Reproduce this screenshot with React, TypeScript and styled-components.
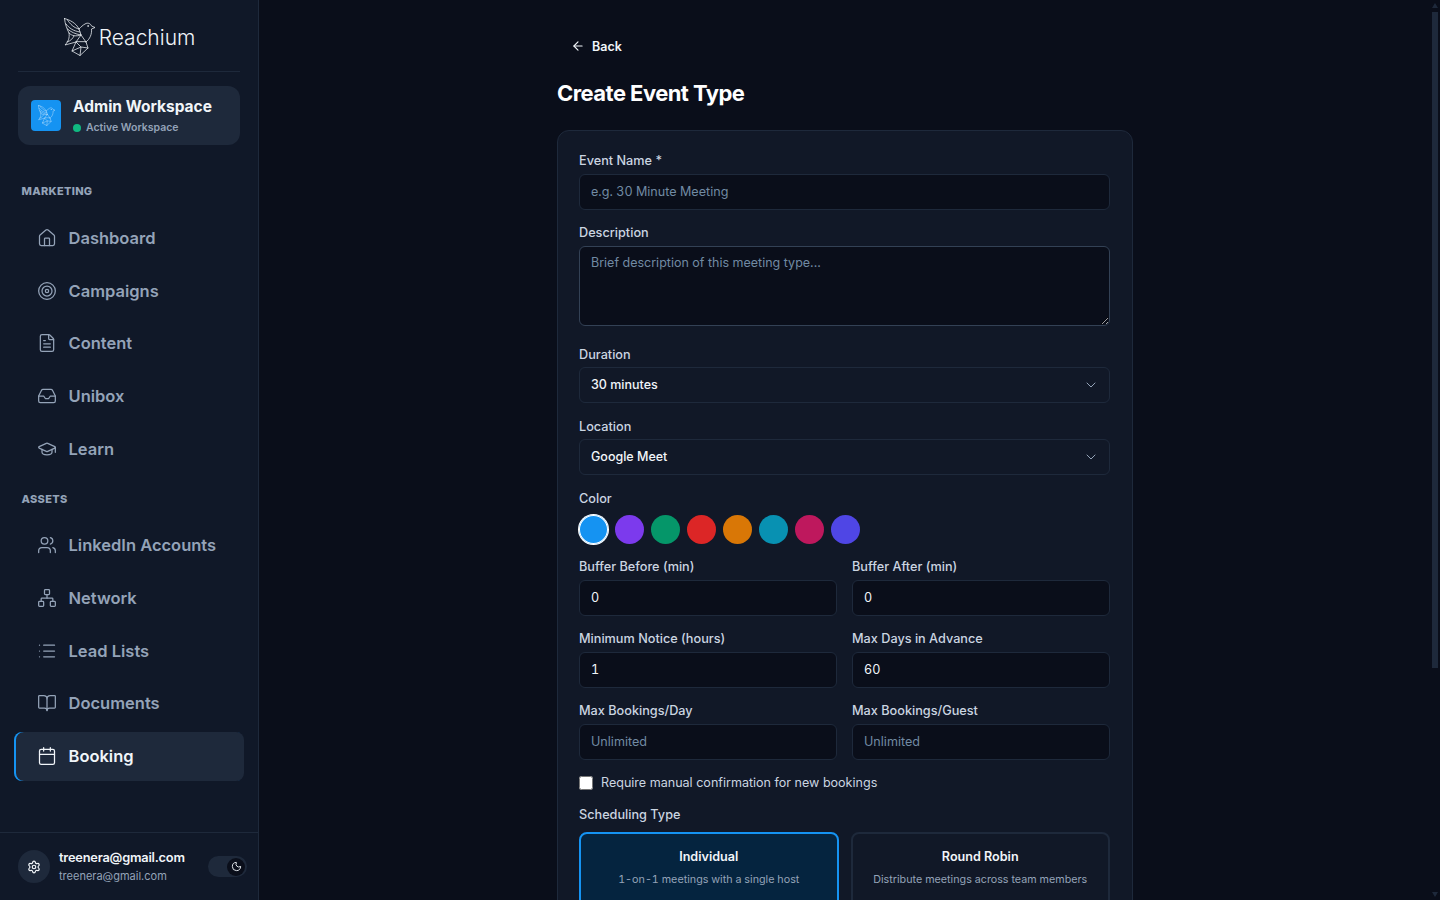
import React from 'react';
import styled, { createGlobalStyle } from 'styled-components';
import { ArrowLeft, BookOpen, Calendar, ChevronDown, FileText, GraduationCap, House, Inbox, List, Moon, Network, Settings, Target, Users } from 'lucide-react';

const Global = createGlobalStyle`
  * { box-sizing: border-box; }
  html, body { margin: 0; height: 100%; overflow: hidden; background: #0a0e1a; }
  body { font-family: Inter, "Noto Sans", sans-serif; color: #e2e8f0; }
  #root { height: 100%; }
`;

const Shell = styled.div`display: flex; height: 100vh;`;
const Sidebar = styled.aside`
  width: 259px; flex: none; height: 100%; background: #101828; border-right: 1px solid #1e293b;
  display: flex; flex-direction: column;
`;
const LogoRow = styled.div`
  height: 72px; margin: 0 18px; border-bottom: 1px solid #1e293b;
  display: flex; align-items: center; justify-content: center; gap: 4px; padding: 3px 0 0 1px;
`;
const LogoText = styled.span`font-size: 21px; font-weight: 300; color: #f1f5f9;`;
const WorkspaceCard = styled.div`
  margin: 14px 18px 0; height: 59px; background: #1e293b; border-radius: 12px; display: flex; align-items: center; gap: 12px; padding: 0 13px;
`;
const WorkspaceLogo = styled.div`width: 30px; height: 31px; border-radius: 4px; background: #1593f2; display: flex; align-items: center; justify-content: center;`;
const WorkspaceText = styled.div`display: flex; flex-direction: column; gap: 4px;`;
const WorkspaceName = styled.div`font-size: 15.5px; line-height: 20px; font-weight: 700; color: #f1f5f9;`;
const WorkspaceState = styled.div`display: flex; align-items: center; gap: 5px; font-size: 10.5px; line-height: 14px; font-weight: 600; color: #94a3b8;`;
const Dot = styled.span`width: 8px; height: 8px; border-radius: 50%; background: #10b981;`;
const Nav = styled.nav`flex: 1; display: flex; flex-direction: column; padding: 0 14px;`;
const SectionLabel = styled.div<{ $top: number }>`
  margin: ${p => p.$top}px 0 0 7.5px; height: 14px; font-size: 11px; line-height: 14px; font-weight: 800; letter-spacing: .3px; color: #94a3b8;
`;
const NavList = styled.div<{ $top: number }>`margin-top: ${p => p.$top}px; display: flex; flex-direction: column; gap: 3.75px;`;
const NavItem = styled.div<{ $active?: boolean }>`
  height: 49px; display: flex; align-items: center; gap: 11.5px; padding: 0 0 1px 23px; font-size: 16.5px; font-weight: 600;
  border-radius: 8px; color: ${p => p.$active ? '#f1f5f9' : '#94a3b8'};
  background: ${p => p.$active ? '#1e293b' : 'transparent'};
  box-shadow: ${p => p.$active ? 'inset 2px 0 0 #1593f2' : 'none'};
  svg { width: 20px; height: 20px; stroke-width: 1.5; flex: none; }
`;
const Footer = styled.div`
  height: 68px; flex: none; border-top: 1px solid #1e293b; display: flex; align-items: center; padding: 0 11px 0 18px; gap: 9px;
`;
const Gear = styled.div`width: 32px; height: 33px; border-radius: 50%; background: #1e293b; display: flex; align-items: center; justify-content: center; color: #f1f5f9;`;
const UserText = styled.div`flex: 1; min-width: 0; padding-bottom: 1px;`;
const UserName = styled.div`font-size: 12.8px; line-height: 18px; font-weight: 600; color: #f1f5f9; letter-spacing: -.2px;`;
const UserMail = styled.div`font-size: 11px; line-height: 16px; margin-top: 1px; color: #94a3b8;`;
const Toggle = styled.div`width: 39px; height: 21px; border-radius: 11px; background: #1e293b; display: flex; justify-content: flex-end; align-items: center; padding-right: 2px;`;
const Knob = styled.div`width: 18px; height: 18px; border-radius: 50%; background: #0a0e1a; color: #f1f5f9; display: flex; align-items: center; justify-content: center;`;

const MainWrap = styled.div`flex: 1; min-width: 0; height: 100%; position: relative;`;
const Main = styled.main`
  height: 100%; overflow-y: auto; background: #0a0e1a; padding-right: 9px;
  scrollbar-width: none;
`;
const Rail = styled.div`
  position: absolute; top: 0; right: 2px; bottom: 0; width: 6px; padding: 3px 0;
  display: flex; flex-direction: column; align-items: stretch; color: #1e293b; pointer-events: none;
`;
const RailThumb = styled.div`height: 656px; margin-top: 4px; background: currentColor;`;
const RailSpacer = styled.div`flex: 1;`;
const Arrow = ({ down }: { down?: boolean }) => (
  <svg width="6" height="5" viewBox="0 0 6 5" style={{ display: 'block' }}>
    <path d={down ? 'M0 0 H6 L3 5 Z' : 'M3 0 L6 5 H0 Z'} fill="currentColor" />
  </svg>
);

const Column = styled.div`width: 576px; margin: 0 auto; padding: 33px 0 210px;`;
const BackLink = styled.div`height: 26px; margin-left: 14px; display: flex; align-items: center; gap: 7px; font-size: 12.5px; font-weight: 600; color: #f1f5f9;`;
const Title = styled.h1`margin: 20px 0 0; font-size: 22px; line-height: 28px; font-weight: 700; letter-spacing: -.55px; color: #fff;`;
const Card = styled.form`margin-top: 23px; background: #111827; border: 1px solid #1e293b; border-radius: 12px; padding: 21px 22px 24px 21px;`;
const Field = styled.div`display: flex; flex-direction: column;`;
const FieldStack = styled.div<{ $top?: number }>`display: flex; flex-direction: column; gap: 14px; margin-top: ${p => p.$top ?? 0}px;`;
const Label = styled.label`font-size: 12.7px; line-height: 17px; font-weight: 500; color: #cbd5e1; margin-bottom: 5px;`;
const Input = styled.input`
  width: 100%; height: 36px; background: #0a0e1a; border: 1px solid #1e293b; border-radius: 6px; padding: 0 11px 2px;
  font: 400 12.6px Inter, sans-serif; font-variant-numeric: tabular-nums; color: #f1f5f9; outline: none;
  &::placeholder { color: #718aa3; opacity: 1; }
`;
const Area = styled.textarea`
  display: block; width: 100%; height: 80px; margin-bottom: 6px; background: #0a0e1a; border: 1px solid #334155; border-radius: 6px; padding: 7px 11px;
  font: 400 12.5px/18px Inter, sans-serif; color: #f1f5f9; outline: none; resize: vertical;
  &::placeholder { color: #718aa3; opacity: 1; }
`;
const Select = styled.div`
  height: 36px; margin: -1px 0 1px; border: 1px solid #1e293b; border-radius: 6px; padding: 0 10px 2px 11px; display: flex; align-items: center; justify-content: space-between;
  font-size: 12.5px; font-weight: 500; color: #f1f5f9;
  svg { width: 16px; height: 16px; color: #94a3b8; stroke-width: 1.5; margin-top: 2px; }
`;
const Swatches = styled.div`display: flex; gap: 7px; margin-top: 3px;`;
const Swatch = styled.button<{ $color: string; $selected?: boolean }>`
  width: 29px; height: 29px; padding: 0; border: none; border-radius: 50%; background: ${p => p.$color};
  box-shadow: ${p => p.$selected ? 'inset 0 0 0 1px #fff, 0 0 0 1px #fff' : 'none'};
`;
const TwoCol = styled.div`display: grid; grid-template-columns: 258px 258px; gap: 14px 15px; margin-top: 14px;`;
const Check = styled.label`display: flex; align-items: center; gap: 8px; font-size: 12.55px; line-height: 18px; color: #cbd5e1; font-weight: 400;`;
const CheckBox = styled.input`width: 14px; height: 14px; margin: 0; accent-color: #1593f2; flex: none;`;
const TypeGrid = styled.div`display: grid; grid-template-columns: 1fr 1fr; gap: 12px; margin-top: 4px;`;
const TypeCard = styled.div<{ $selected?: boolean }>`
  height: 76px; border-radius: 8px; border: 2px solid ${p => p.$selected ? '#1593f2' : '#1e293b'};
  background: ${p => p.$selected ? '#05243f' : 'transparent'}; text-align: center; padding-top: 14px;
`;
const TypeName = styled.div`font-size: 12.6px; line-height: 18px; font-weight: 600; color: #f1f5f9;`;
const TypeDesc = styled.div`margin-top: 6px; font-size: 10.75px; line-height: 16px; font-variant-numeric: tabular-nums; color: #94a3b8;`;
const Actions = styled.div`display: flex; justify-content: flex-end; gap: 12px; margin-top: 24px;`;
const Btn = styled.button<{ $primary?: boolean }>`
  height: 36px; padding: 0 16px; border-radius: 6px; font: 600 13px Inter, sans-serif; color: #f1f5f9;
  border: 1px solid ${p => p.$primary ? '#1593f2' : '#1e293b'}; background: ${p => p.$primary ? '#1593f2' : 'transparent'};
`;

const Bird = ({ width, color }: { width: number; color: string }) => (
  <svg width={width} height={width * 38 / 31} viewBox="0 0 31 38" fill="none" stroke={color} strokeWidth={0.75} strokeLinejoin="round" strokeLinecap="round">
    <path d="M0.5 0.5 C6 2 12 5 15 11 L17 17 C12 18.5 8 18 5 15 C3 11 1 6 0.5 0.5 Z" />
    <path d="M3.5 2 C6 6 10 10 15 11 M2 6 C5 10 9 13 16 14 M3.5 11 C7 14 11 16 17 17" />
    <path d="M15 11 C17 9 19 7 21 6 C24 4 27 6 27.5 8 L31 9.5 L27.5 11 C28 16 26 21 22 24" />
    <path d="M5 15 C6 20 4 24 1 27 L12 24 L17 17 M3 24 C7 23 9 20 10 18" />
    <path d="M12 24 L8 33 L16 37.5 L24 30 L22 24 Z M8 33 L17 29 L24 30 M12 24 L17 29 L16 37.5 M17 17 L22 24" />
    <circle cx="24" cy="8" r="0.4" />
  </svg>
);

const marketing = [
  { label: 'Dashboard', Icon: House },
  { label: 'Campaigns', Icon: Target },
  { label: 'Content', Icon: FileText },
  { label: 'Unibox', Icon: Inbox },
  { label: 'Learn', Icon: GraduationCap },
];
const assets = [
  { label: 'LinkedIn Accounts', Icon: Users },
  { label: 'Network', Icon: Network },
  { label: 'Lead Lists', Icon: List },
  { label: 'Documents', Icon: BookOpen },
  { label: 'Booking', Icon: Calendar, active: true },
];
const colors = ['#1593f2', '#7c3aed', '#059669', '#dc2626', '#d97706', '#0891b2', '#be185d', '#4f46e5'];

export default function App() {
  return (
    <Shell>
      <Global />
      <Sidebar>
        <LogoRow>
          <Bird width={31} color="#f1f5f9" />
          <LogoText>Reachium</LogoText>
        </LogoRow>
        <WorkspaceCard>
          <WorkspaceLogo><Bird width={17} color="#d6ecfd" /></WorkspaceLogo>
          <WorkspaceText>
            <WorkspaceName>Admin Workspace</WorkspaceName>
            <WorkspaceState><Dot />Active Workspace</WorkspaceState>
          </WorkspaceText>
        </WorkspaceCard>
        <Nav>
          <SectionLabel $top={39}>MARKETING</SectionLabel>
          <NavList $top={15.75}>
            {marketing.map(({ label, Icon }) => (
              <NavItem key={label}><Icon />{label}</NavItem>
            ))}
          </NavList>
          <SectionLabel $top={18.25}>ASSETS</SectionLabel>
          <NavList $top={15}>
            {assets.map(({ label, Icon, active }) => (
              <NavItem key={label} $active={active}><Icon />{label}</NavItem>
            ))}
          </NavList>
        </Nav>
        <Footer>
          <Gear><Settings size={14} /></Gear>
          <UserText>
            <UserName>treenera@gmail.com</UserName>
            <UserMail>treenera@gmail.com</UserMail>
          </UserText>
          <Toggle><Knob><Moon size={11} /></Knob></Toggle>
        </Footer>
      </Sidebar>
      <MainWrap>
        <Main>
          <Column>
            <BackLink><ArrowLeft size={14} />Back</BackLink>
            <Title>Create Event Type</Title>
            <Card>
              <FieldStack>
                <Field><Label>Event Name *</Label><Input placeholder="e.g. 30 Minute Meeting" /></Field>
                <Field><Label>Description</Label><Area placeholder="Brief description of this meeting type..." /></Field>
                <Field><Label>Duration</Label><Select>30 minutes<ChevronDown /></Select></Field>
                <Field><Label>Location</Label><Select>Google Meet<ChevronDown /></Select></Field>
                <Field>
                  <Label>Color</Label>
                  <Swatches>
                    {colors.map((c, i) => <Swatch key={c} type="button" $color={c} $selected={i === 0} />)}
                  </Swatches>
                </Field>
              </FieldStack>
              <TwoCol>
                <Field><Label>Buffer Before (min)</Label><Input defaultValue="0" /></Field>
                <Field><Label>Buffer After (min)</Label><Input defaultValue="0" /></Field>
                <Field><Label>Minimum Notice (hours)</Label><Input defaultValue="1" /></Field>
                <Field><Label>Max Days in Advance</Label><Input defaultValue="60" /></Field>
                <Field><Label>Max Bookings/Day</Label><Input placeholder="Unlimited" /></Field>
                <Field><Label>Max Bookings/Guest</Label><Input placeholder="Unlimited" /></Field>
              </TwoCol>
              <FieldStack $top={14}>
                <Check><CheckBox type="checkbox" />Require manual confirmation for new bookings</Check>
                <Field>
                  <Label>Scheduling Type</Label>
                  <TypeGrid>
                    <TypeCard $selected><TypeName>Individual</TypeName><TypeDesc>1-on-1 meetings with a single host</TypeDesc></TypeCard>
                    <TypeCard><TypeName>Round Robin</TypeName><TypeDesc>Distribute meetings across team members</TypeDesc></TypeCard>
                  </TypeGrid>
                </Field>
              </FieldStack>
              <Actions>
                <Btn type="button">Cancel</Btn>
                <Btn type="button" $primary>Create Event Type</Btn>
              </Actions>
            </Card>
          </Column>
        </Main>
        <Rail aria-hidden="true">
          <Arrow />
          <RailThumb />
          <RailSpacer />
          <Arrow down />
        </Rail>
      </MainWrap>
    </Shell>
  );
}
